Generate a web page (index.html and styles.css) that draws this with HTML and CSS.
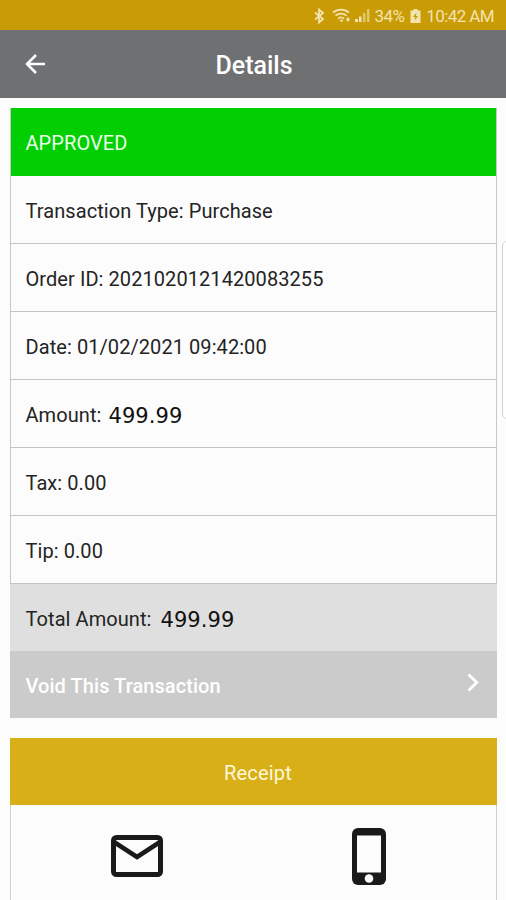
FILE: index.html
```html
<!DOCTYPE html>
<html lang="en">
<head>
    <meta charset="UTF-8">
    <meta name="viewport" content="width=device-width, initial-scale=1.0">
    <title>Details</title>
    <link rel="stylesheet" href="styles.css">
</head>
<body>
    <div class="screen">
        <!-- Status bar -->
        <div class="status-bar">
            <svg class="bluetooth" width="12" height="16" viewBox="0 0 12 16" fill="none" stroke="currentColor" stroke-width="1.8">
                <path d="M2 4.5l8 6.500-4 3.500V1.500L10 5l-8 6.500"/>
            </svg>
            <svg class="wifi" width="20" height="16" viewBox="0 0 20 16" fill="none" stroke="currentColor" stroke-width="1.8">
                <path d="M1 4.600c4.600-4.100 11.400-4.100 16 0M3.500 7.700c3.200-2.900 7.800-2.900 11 0M6 10.700c1.800-1.600 4.200-1.600 6 0"/>
                <path d="M7.500 11.800h4L9.500 14.500z" fill="currentColor" stroke="none"/>
                <path d="M14 11.500l2-2.500 2 2.500-2 2.500z" fill="currentColor" stroke="none"/>
            </svg>
            <svg class="signal" width="15" height="15" viewBox="0 0 15 15" fill="currentColor">
                <path d="M0 11h3v3H0zM4 8.500h2.500V14H4z"/>
                <path d="M8 5h2.500v9H8zM12 1h2.500v13H12z" opacity=".6"/>
            </svg>
            <span>34%</span>
            <svg class="battery" width="11" height="16" viewBox="0 0 11 16">
                <path d="M3.500 1h4v1.500H10.500V15H.5V2.500h3z" fill="currentColor"/>
                <path d="M6.500 4.500L3 9h2.200l-.7 3.500L8 8H5.800z" fill="#c99b05"/>
            </svg>
            <span>10:42 AM</span>
        </div>

        <div class="header">
            <svg class="back" width="22" height="20" viewBox="0 0 22 20" fill="none" stroke="currentColor" stroke-width="2.5">
                <path d="M20 10H2.500M11 1L2 10l9 9"/>
            </svg>
            <h1>Details</h1>
        </div>

        <div class="content">
            <!-- Transaction -->
            <div class="card">
                <div class="row approved">APPROVED</div>
                <div class="row">Transaction Type: Purchase</div>
                <div class="row">Order ID: 2021020121420083255</div>
                <div class="row">Date: 01/02/2021 09:42:00</div>
                <div class="row"><span>Amount:</span><span class="value">499.99</span></div>
                <div class="row">Tax: 0.00</div>
                <div class="row">Tip: 0.00</div>
            </div>
            <div class="row total"><span>Total Amount:</span><span class="value">499.99</span></div>
            <div class="row void">
                <span>Void This Transaction</span>
                <svg width="13" height="19" viewBox="0 0 13 19" fill="none" stroke="currentColor" stroke-width="2.8">
                    <path d="M1.500 1.500l8.300 8-8.300 8"/>
                </svg>
            </div>

            <!-- Receipt -->
            <div class="receipt">
                <div class="receipt-title">Receipt</div>
                <div class="receipt-options">
                    <svg width="52" height="42" viewBox="0 0 52 42" fill="none" stroke="currentColor">
                        <rect x="2.500" y="2.500" width="47" height="37" rx="3" stroke-width="5"/>
                        <path d="M3 7l23 15L49 7" stroke-width="4.500"/>
                    </svg>
                    <svg width="34" height="57" viewBox="0 0 34 57">
                        <rect width="34" height="57" rx="6" fill="currentColor"/>
                        <rect x="5" y="7.500" width="24" height="37" fill="#fcfcfc"/>
                        <circle cx="17" cy="50.500" r="4.300" fill="#fcfcfc"/>
                    </svg>
                </div>
            </div>
        </div>

        <div class="edge-handle"></div>
    </div>
</body>
</html>
```
FILE: styles.css
```css
* {
    box-sizing: border-box;
}
body {
    margin: 0;
    font-family: Roboto, "Liberation Sans", sans-serif;
    background-color: #fcfcfc;
    color: #242424;
}
.screen {
    position: relative;
    height: 900px;
    overflow: hidden;
}
.status-bar {
    display: flex;
    align-items: center;
    justify-content: flex-end;
    height: 30px;
    padding: 1px 12px 0 0;
    background-color: #c99b05;
    color: #f3e3ae;
    font-size: 17px;
    letter-spacing: -0.6px;
}
.bluetooth {
    margin-right: 7px;
}
.wifi {
    margin-right: 3px;
}
.signal {
    margin-right: 5px;
}
.battery {
    margin: 0 5px 0 6px;
}
.header {
    display: grid;
    grid-template-columns: 60px 1fr 60px;
    align-items: center;
    height: 68px;
    background-color: #6f7072;
    color: #fff;
}
.back {
    margin-left: 25px;
}
.header h1 {
    margin: 2px 0 0 2px;
    text-align: center;
    font-size: 25px;
    font-weight: 500;
}
.content {
    padding: 10px 9px 0 10px;
}
.card {
    border: 1px solid #c8c8c8;
    border-width: 0 1px;
}
.row {
    display: flex;
    align-items: center;
    height: 68px;
    padding: 2px 15px 0 14.5px;
    border-bottom: 1px solid #c4c4c4;
    font-size: 20px;
    letter-spacing: 0.07px;
    white-space: nowrap;
}
.approved {
    border-bottom-color: #02cf02;
    background-color: #02cf02;
    color: #e9ffe9;
}
.value {
    margin: 2px 0 0 7px;
    font-family: "DejaVu Sans", sans-serif;
    font-size: 21px;
    color: #111;
}
.total,
.void {
    height: 67px;
    padding: 2px 17px 0 15.5px;
    border-bottom: 0;
}
.total {
    background-color: #dfdfdf;
}
.total .value {
    margin-left: 9px;
}
.void {
    justify-content: space-between;
    background-color: #cbcbcb;
    color: #fff;
    font-weight: 500;
}
.void svg {
    margin-top: -7px;
}
.receipt {
    height: 180px;
    margin-top: 20px;
    border: 1px solid #d0d0d0;
    border-width: 0 1px;
}
.receipt-title {
    height: 67px;
    margin: 0 -1px;
    padding-left: 9px;
    background-color: #d8af16;
    color: #fff8dc;
    font-size: 20px;
    letter-spacing: 0.2px;
    line-height: 70px;
    text-align: center;
}
.receipt-options {
    display: grid;
    grid-template-columns: 1fr 1fr;
    justify-items: center;
    align-items: center;
    height: 102px;
    padding: 0 11px 0 10px;
    color: #1a1a1a;
}
/* pull-out handle on the right edge */
.edge-handle {
    position: absolute;
    top: 241px;
    right: -6px;
    width: 10px;
    height: 178px;
    border: 1px solid #d2d2d2;
    border-radius: 5px;
    background-color: #fff;
}
```
